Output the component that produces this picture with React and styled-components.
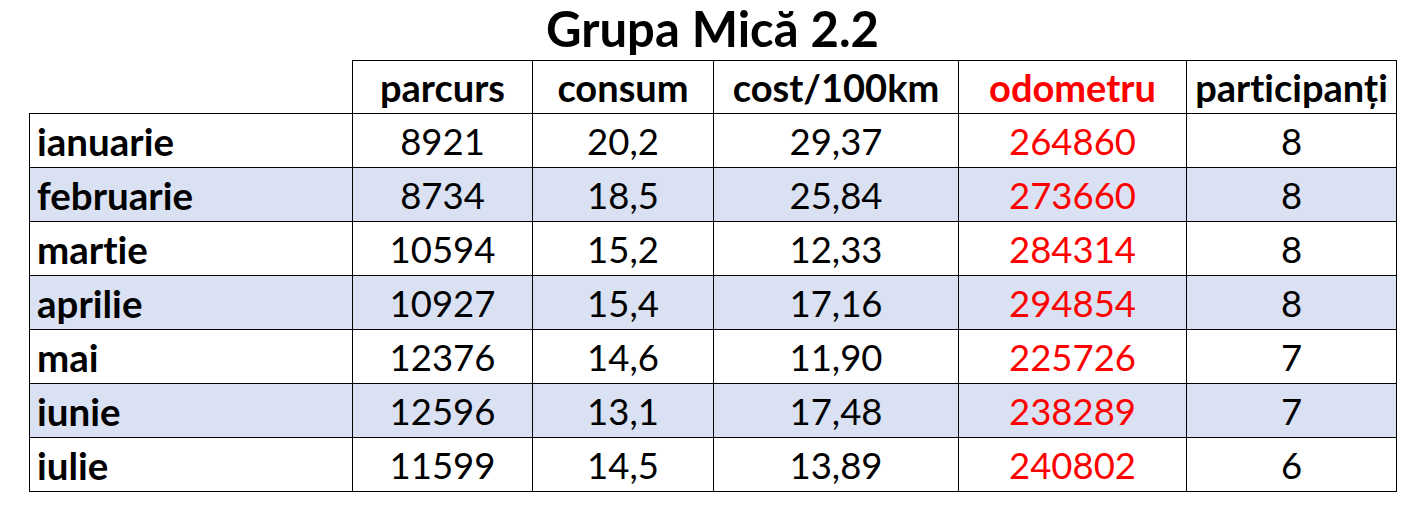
import React from "react";
import styled, { createGlobalStyle } from "styled-components";

const Global = createGlobalStyle`
  html, body { margin: 0; padding: 0; background: #fff; }
  body {
    font-family: Lato, "Open Sans", sans-serif;
    color: #000;
    font-variant-ligatures: none;
    font-feature-settings: "liga" 0, "clig" 0, "dlig" 0;
  }
`;

const Page = styled.div`
  width: 1422px;
  height: 512px;
  padding: 0 0 0 29px;
  box-sizing: border-box;
`;

const Title = styled.h1`
  width: 1367px;
  margin: 0;
  height: 60px;
  line-height: 56px;
  text-align: center;
  font-size: 49px;
  font-weight: 700;
`;

const Table = styled.table`
  border-collapse: collapse;
  table-layout: fixed;
  width: 1367px;
  font-size: 36.5px;
`;

const Row = styled.tr`
  height: ${(p) => (p.$head ? 53 : 54)}px;
  background: ${(p) => (p.$striped ? "#D9E1F2" : "#fff")};
`;

const HeadCell = styled.th`
  border: ${(p) => (p.$blank ? "none" : "1px solid #000")};
  font-weight: 700;
  font-size: 38px;
  color: ${(p) => (p.$red ? "#FF0000" : "#000")};
  padding: 0;
  text-align: center;
  vertical-align: middle;
  white-space: nowrap;
`;

const MonthCell = styled.td`
  border: 1px solid #000;
  font-weight: 700;
  font-size: 38.5px;
  padding: 0 0 0 7px;
  text-align: left;
  vertical-align: middle;
`;

const Cell = styled.td`
  border: 1px solid #000;
  padding: 0;
  text-align: center;
  vertical-align: middle;
  color: ${(p) => (p.$red ? "#FF0000" : "#000")};
`;

const widths = [323, 180, 181, 245, 228, 210];
const headers = [
  { t: "parcurs" },
  { t: "consum" },
  { t: "cost/100km" },
  { t: "odometru", red: true },
  { t: "participanți" },
];

const data = [
  ["ianuarie", "8921", "20,2", "29,37", "264860", "8"],
  ["februarie", "8734", "18,5", "25,84", "273660", "8"],
  ["martie", "10594", "15,2", "12,33", "284314", "8"],
  ["aprilie", "10927", "15,4", "17,16", "294854", "8"],
  ["mai", "12376", "14,6", "11,90", "225726", "7"],
  ["iunie", "12596", "13,1", "17,48", "238289", "7"],
  ["iulie", "11599", "14,5", "13,89", "240802", "6"],
];

export default function App() {
  return (
    <Page>
      <Global />
      <Title>Grupa Mică 2.2</Title>
      <Table>
        <colgroup>
          {widths.map((w, i) => (
            <col key={i} style={{ width: w }} />
          ))}
        </colgroup>
        <thead>
          <Row $head>
            <HeadCell $blank />
            {headers.map((h) => (
              <HeadCell key={h.t} $red={h.red}>
                {h.t}
              </HeadCell>
            ))}
          </Row>
        </thead>
        <tbody>
          {data.map((r, i) => (
            <Row key={r[0]} $striped={i % 2 === 1}>
              <MonthCell>{r[0]}</MonthCell>
              {r.slice(1).map((v, j) => (
                <Cell key={j} $red={j === 3}>
                  {v}
                </Cell>
              ))}
            </Row>
          ))}
        </tbody>
      </Table>
    </Page>
  );
}
